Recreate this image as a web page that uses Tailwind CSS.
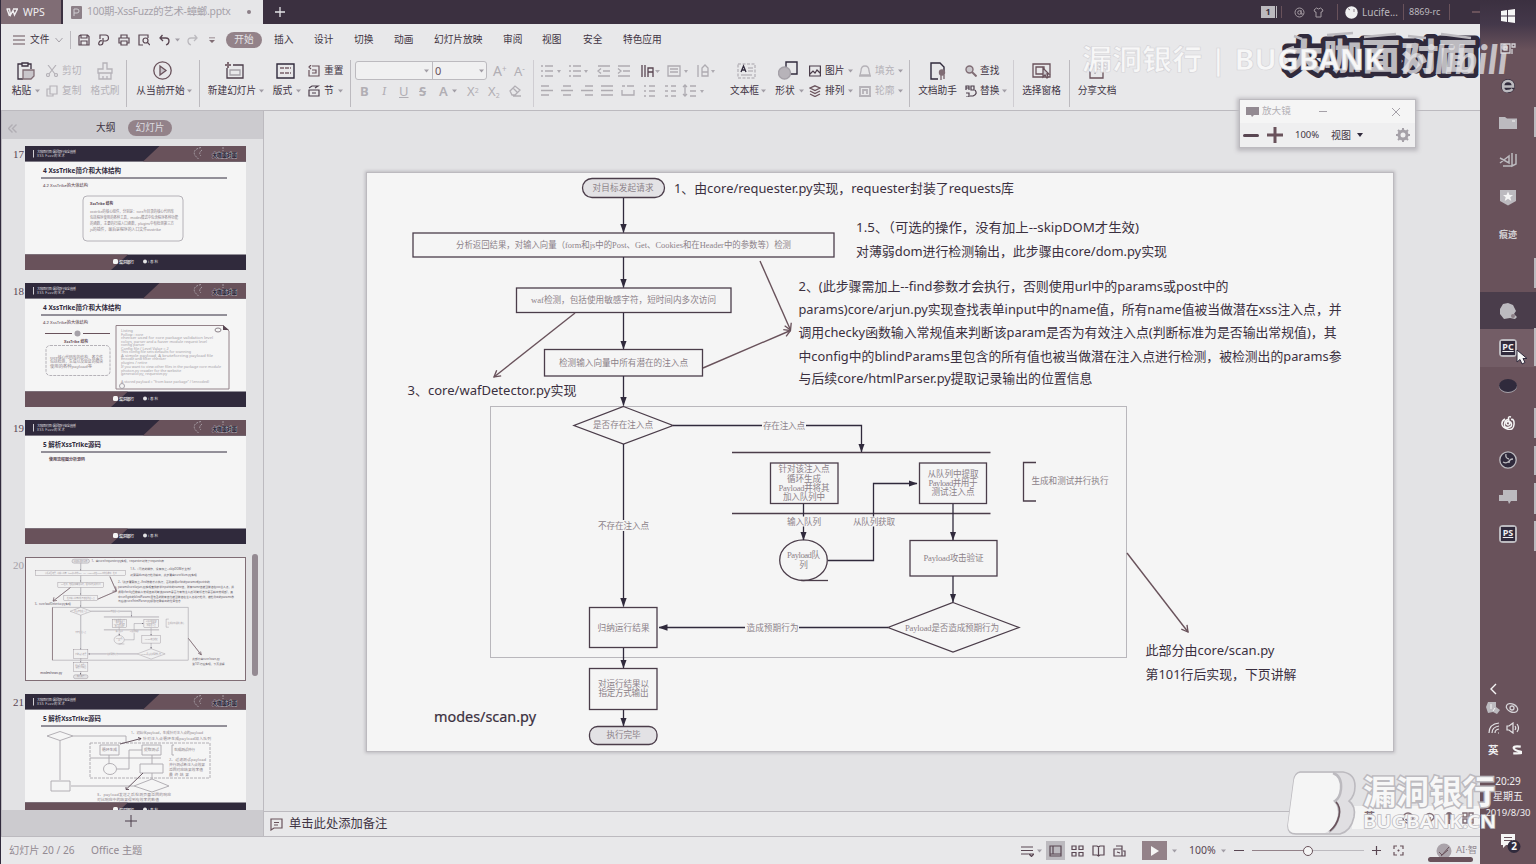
<!DOCTYPE html>
<html lang="zh-CN">
<head>
<meta charset="utf-8">
<title>WPS 演示</title>
<script src="https://cdn.jsdelivr.net/npm/@tailwindcss/browser@4"></script>
</head>
<body class="relative h-[864px] w-[1536px] overflow-hidden bg-[#e6e6e8] font-['Noto_Sans','Noto_Sans_CJK_SC',sans-serif] text-[#3f3443]">

<!-- shared symbols -->
<svg class="absolute h-0 w-0" aria-hidden="true">
  <defs>
    <marker id="solid" viewBox="0 0 9 7" refX="8.5" refY="3.5" markerWidth="9" markerHeight="7" markerUnits="userSpaceOnUse" orient="auto"><path d="M0 0.3 9 3.5 0 6.7Z" fill="#302a3c"/></marker>
    <marker id="open" viewBox="0 0 10 10" refX="9" refY="5" markerWidth="9" markerHeight="9" markerUnits="userSpaceOnUse" orient="auto"><path d="M2 1 9 5 2 9" fill="none" stroke="#69525b" stroke-width="1.5"/></marker>
    <symbol id="dd" viewBox="0 0 5 4"><path d="M0 0.5h5L2.5 3.5Z" fill="#a19da5"/></symbol>
    <symbol id="frame" viewBox="0 0 221 124">
      <rect width="221" height="124" fill="#f5f5f5"/>
      <rect width="221" height="15.6" fill="#302a3c"/>
      <path d="M134.500 0H221V15.600H118Z" fill="#69525b"/>
      <path d="M8.500 4v7.500" stroke="#cfcdd2" stroke-width="1"/>
      <g fill="#d8d6da" font-size="3.400"><text x="12" y="6.800" textLength="39">大咖面对面 · 漏洞银行安全直播</text><text x="12" y="11.200" textLength="28">XSS Fuzz的艺术</text></g>
      <path d="M176 1.500q-9 2-6 8l4 4M198 1v4M177 4q-4 3-1 6" fill="none" stroke="#bfbcc2" stroke-width=".7" stroke-dasharray="2 1"/>
      <text x="187" y="10.500" font-size="5.500" font-weight="900" fill="#302a3c" stroke="#bfbcc2" stroke-width=".6" paint-order="stroke" textLength="25">大咖面对面</text>
      <rect y="108.500" width="221" height="15.500" fill="#302a3c"/>
      <path d="M0 108.500H103L86 124H0Z" fill="#69525b"/>
      <rect x="88" y="113" width="5" height="5" rx="1.500" fill="#f5f5f5"/>
      <text x="94" y="117.500" font-size="4" fill="#f5f5f5" font-weight="500" textLength="15">漏洞银行</text>
      <circle cx="120" cy="115.500" r="2" fill="#e4e4e6"/><text x="123" y="117" font-size="3.600" fill="#e4e4e6" textLength="10">i春秋</text>
      <path d="M16 32H202" stroke="#302a3c" stroke-width="1"/>
    </symbol>

    <!-- flow chart slide -->
    <symbol id="slide" viewBox="367 173 1026 578">
      <rect x="367" y="173" width="1026" height="578" fill="#f5f5f5"/>
      <rect x="490.500" y="406.500" width="636" height="251" fill="none" stroke="#b9b7bc"/>
      <g fill="none" stroke="#4b3d4a" stroke-width="1.300">
        <rect x="582.500" y="178.500" width="82" height="19" rx="9.500" fill="#e3e2e5"/>
        <rect x="413" y="233" width="421" height="24"/>
        <rect x="516.500" y="288" width="214.500" height="24.500"/>
        <rect x="544.500" y="349.500" width="158" height="26.500"/>
        <path d="M623.500 406.500 673 425.500 623.500 444 574 425.500Z"/>
        <path d="M732 452.500H990.500M732 513.500H990.500"/>
        <rect x="770.500" y="463" width="67.500" height="40.500"/>
        <rect x="919.500" y="463" width="67" height="40.500"/>
        <path d="M1036 462.500H1023.500V501H1036"/>
        <ellipse cx="803.500" cy="560.200" rx="23.800" ry="20.300"/><path d="M801 580.500H828"/>
        <rect x="910" y="540.500" width="87" height="35.500"/>
        <path d="M953 602.500 1019 627.500 953 652 888 627.500Z"/>
        <rect x="589.500" y="607.500" width="67.500" height="40"/>
        <rect x="589.500" y="668.500" width="67.500" height="41"/>
        <rect x="589.500" y="726.500" width="67.500" height="18" rx="8" fill="#e3e2e5"/>
      </g>
      <g fill="none" stroke="#302a3c" stroke-width="1.300">
        <path d="M623.500 198V232.500" marker-end="url(#solid)"/><path d="M623.500 257V287.500" marker-end="url(#solid)"/><path d="M623.500 313V349" marker-end="url(#solid)"/><path d="M623.500 376V405.500" marker-end="url(#solid)"/><path d="M623.500 444V606.500" marker-end="url(#solid)"/><path d="M623.500 648V668" marker-end="url(#solid)"/><path d="M623.500 710V726" marker-end="url(#solid)"/>
        <path d="M673 425.500H861.500V452" marker-end="url(#solid)"/><path d="M803.500 504V540" marker-end="url(#solid)"/><path d="M828 560.500H873.500V483.500H917" marker-end="url(#solid)"/><path d="M953 504V540" marker-end="url(#solid)"/><path d="M953 576V602" marker-end="url(#solid)"/><path d="M888 627.500H659" marker-end="url(#solid)"/>
      </g>
      <g fill="none" stroke="#69525b" stroke-width="1.400">
        <path d="M760 261 790.500 330" marker-end="url(#open)"/><path d="M703 368 790.500 330.500" marker-end="url(#open)"/><path d="M575 313 494 377" marker-end="url(#open)"/><path d="M1127 553 1188 632" marker-end="url(#open)"/>
      </g>
      <g fill="#f5f5f5"><rect x="762" y="420" width="44" height="11"/><rect x="597" y="520" width="53" height="11"/><rect x="786" y="516.500" width="36" height="10"/><rect x="852" y="516.500" width="44" height="10"/><rect x="745" y="622" width="54" height="11"/></g>
      <g fill="#8c8289" font-family="'Liberation Serif','Noto Sans CJK SC',serif" font-size="8.600" text-anchor="middle">
        <text x="623" y="190.500" textLength="61">对目标发起请求</text>
        <text x="623.500" y="248" textLength="335" lengthAdjust="spacingAndGlyphs">分析返回结果，对输入向量（form和js中的Post、Get、Cookies和在Header中的参数等）检测</text>
        <text x="623.500" y="303" textLength="185" lengthAdjust="spacingAndGlyphs">waf检测，包括使用敏感字符，短时间内多次访问</text>
        <text x="623.500" y="365.500" textLength="129">检测输入向量中所有潜在的注入点</text>
        <text x="623" y="428" textLength="60">是否存在注入点</text>
        <text x="784" y="428.500" textLength="42">存在注入点</text>
        <text x="804" y="472" textLength="51">针对该注入点</text><text x="804" y="481.500" textLength="34">循环生成</text><text x="804" y="490.500" textLength="51">Payload并将其</text><text x="804" y="499.500" textLength="42">加入队列中</text>
        <text x="953" y="476.500" textLength="51">从队列中提取</text><text x="953" y="486" textLength="49">Payload并用于</text><text x="953" y="495" textLength="43">测试注入点</text>
        <text x="1070" y="484" textLength="77">生成和测试并行执行</text>
        <text x="804" y="524.500" textLength="34">输入队列</text><text x="874" y="524.500" textLength="42">从队列获取</text>
        <text x="623.500" y="528.500" textLength="51">不存在注入点</text>
        <text x="803.500" y="558" textLength="33">Payload队</text><text x="803.500" y="567.500">列</text>
        <text x="953.500" y="561" textLength="60">Payload攻击验证</text>
        <text x="952" y="630.500" textLength="94">Payload是否造成预期行为</text>
        <text x="772.500" y="630.500" textLength="52">造成预期行为</text>
        <text x="623.500" y="630.500" textLength="52">归纳运行结果</text>
        <text x="623.500" y="687" textLength="51">对运行结果以</text><text x="623.500" y="696" textLength="50">指定方式输出</text>
        <text x="623.500" y="738" textLength="34">执行完毕</text>
      </g>
      <g fill="#3b3040" font-size="13">
        <text x="674" y="193" textLength="340" lengthAdjust="spacingAndGlyphs">1、由core/requester.py实现，requester封装了requests库</text>
        <text x="856" y="232" textLength="283" lengthAdjust="spacingAndGlyphs">1.5、（可选的操作，没有加上--skipDOM才生效)</text>
        <text x="856" y="256" textLength="311" lengthAdjust="spacingAndGlyphs">对薄弱dom进行检测输出，此步骤由core/dom.py实现</text>
        <text x="798.500" y="291" textLength="430" lengthAdjust="spacingAndGlyphs">2、(此步骤需加上--find参数才会执行，否则使用url中的params或post中的</text>
        <text x="798.500" y="314" textLength="543" lengthAdjust="spacingAndGlyphs">params)core/arjun.py实现查找表单input中的name值，所有name值被当做潜在xss注入点，并</text>
        <text x="798.500" y="337" textLength="538" lengthAdjust="spacingAndGlyphs">调用checky函数输入常规值来判断该param是否为有效注入点(判断标准为是否输出常规值)，其</text>
        <text x="798.500" y="360.500" textLength="543" lengthAdjust="spacingAndGlyphs">中config中的blindParams里包含的所有值也被当做潜在注入点进行检测，被检测出的params参</text>
        <text x="798.500" y="383" textLength="294" lengthAdjust="spacingAndGlyphs">与后续core/htmlParser.py提取记录输出的位置信息</text>
        <text x="407.500" y="394.500" textLength="169" lengthAdjust="spacingAndGlyphs">3、core/wafDetector.py实现</text>
        <text x="1145.500" y="655" textLength="129" lengthAdjust="spacingAndGlyphs">此部分由core/scan.py</text>
        <text x="1145.500" y="678.500" textLength="151" lengthAdjust="spacingAndGlyphs">第101行后实现，下页讲解</text>
        <text x="434" y="721.500" font-size="13.500" stroke="#3b3040" stroke-width=".2" textLength="102" lengthAdjust="spacingAndGlyphs">modes/scan.py</text>
      </g>
    </symbol>
  </defs>
</svg>

<div class="flex h-full">
<div class="flex w-[1480px] flex-col border-l border-[#302a3c]">

  <!-- title bar -->
  <header class="flex h-6 shrink-0 items-stretch bg-[#3b3040] text-[10px] text-[#bcb9be]">
    <div class="flex w-[60px] items-center gap-[5px] bg-[#806d75] pl-[5px] text-[#f0eff1]">
      <svg class="h-[9px] w-3" viewBox="0 0 12 9" fill="none" stroke="currentColor" stroke-width="1.400"><path d="M.5 1h3l1 6L7 2.500 8.500 7 11.500 1H7M1 1l2.500 7"/></svg>
      <span class="text-[10.500px] leading-none">WPS</span>
    </div>
    <div class="ml-0.5 flex w-[200px] items-center bg-[#e6e6e8] pl-2 text-[#a5a1a8]">
      <svg class="h-[13px] w-[11px]" viewBox="0 0 11 13"><rect width="11" height="13" rx="1" fill="#8c7f87"/><path d="M3 10V3h3a2 2 0 0 1 0 4H3" fill="none" stroke="#cfcdd1"/></svg>
      <span class="ml-[5px] w-[142px] whitespace-nowrap text-[10.400px] tracking-[-0.250px]">100期-XssFuzz的艺术-蟑螂.pptx</span>
      <span class="ml-[18px] h-1 w-1 rounded-full bg-[#8c7f87]"></span>
    </div>
    <svg class="ml-3 mt-[7px] h-[10px] w-[10px]" viewBox="0 0 10 10" stroke="#e4e3e6" stroke-width="1.300"><path d="M5 0V10M0 5H10"/></svg>
    <div class="ml-auto flex items-center">
      <div class="h-3 w-3.5 bg-[#bcbabf] text-center text-[9px] font-bold leading-3 text-[#3b3040]">1</div><span class="ml-px h-3 w-px bg-[#bcbabf]"></span><span class="ml-1 h-3 w-px bg-[#69525b]"></span>
      <svg class="ml-3 h-[11px] w-[11px]" viewBox="0 0 11 11" fill="none" stroke="#a39aa1"><circle cx="5.500" cy="5.500" r="4.500"/><circle cx="5.500" cy="5.500" r="1.800"/><path d="M7 3v4h2"/></svg>
      <svg class="ml-2 h-[11px] w-[11px]" viewBox="0 0 11 11" fill="none" stroke="#a39aa1"><path d="M3.500 1 1 3l1 2h1v5h5V5h1l1-2-2.500-2Q5.500 3 3.500 1Z"/></svg>
      <span class="ml-[13px] h-4 w-px bg-[#69525b]"></span>
      <svg class="ml-[7px] h-[13px] w-[13px]" viewBox="0 0 13 13"><circle cx="6.500" cy="6.500" r="6.200" fill="#f0f0f1"/><path d="M3 2.500l2 1.500M9 3v3" stroke="#8c7f87"/></svg>
      <span class="ml-1 w-[41px] text-[10px]">Lucife...</span>
      <span class="h-4 w-px bg-[#69525b]"></span>
      <span class="ml-[5px] w-10 text-[9px]">8869-rc</span>
      <span class="h-4 w-px bg-[#69525b]"></span><span class="ml-[22px] h-0.5 w-2 bg-[#69525b]"></span>
    </div>
  </header>

  <!-- menu row -->
  <nav class="flex h-[31px] shrink-0 items-center whitespace-nowrap bg-[#e8e8ea] pl-3 pt-px text-[9.700px]">
    <svg class="h-2.5 w-[12px]" viewBox="0 0 12 10" stroke="#69525b" stroke-width="1.200"><path d="M0 1H12M0 5H12M0 9H12"/></svg>
    <span class="ml-[5px] w-[25px]">文件</span>
    <svg class="h-2 w-2" viewBox="0 0 8 8" fill="none" stroke="#a5a1a8"><path d="M.5 2 4 6 7.500 2"/></svg>
    <span class="ml-[7px] h-[18px] w-px bg-[#bcbabf]"></span>
    <div class="ml-[7px] flex w-[148px] items-center gap-2 text-[#594652]">
      <svg class="h-3 w-3" viewBox="0 0 12 12" fill="none" stroke="currentColor" stroke-width="1.200"><path d="M1 11V2L2.500 1h7L11 2.500V11ZM3 1v3h6V1M3 11V7h6v4"/></svg>
      <svg class="h-3 w-3" viewBox="0 0 12 12" fill="none" stroke="currentColor" stroke-width="1.200"><path d="M2 5V1h5.500a3 3 0 0 1 0 6H5M5 4v4q0 3-2.500 3T1 8.500 4 7"/></svg>
      <svg class="h-3 w-3" viewBox="0 0 12 12" fill="none" stroke="currentColor" stroke-width="1.200"><path d="M3 4V1h6v3M3 9H1V4h10v5H9M3 7h6v4H3Z"/></svg>
      <svg class="h-3 w-3" viewBox="0 0 12 12" fill="none" stroke="currentColor" stroke-width="1.200"><path d="M5 11H1V1h9v3"/><circle cx="7.500" cy="6.500" r="2.500"/><path d="M9.500 8.500 12 11"/></svg>
      <svg class="ml-px h-3 w-[11px]" viewBox="0 0 11 12" fill="none" stroke="currentColor" stroke-width="1.300"><path d="M3.500 1 1 4l3 3M1.500 4H7q3 0 3 3t-3 4"/></svg>
      <svg class="-ml-[3px] h-1 w-[5px]"><use href="#dd"/></svg>
      <svg class="-ml-px h-3 w-[11px]" viewBox="0 0 11 12" fill="none" stroke="#bcbabf" stroke-width="1.300"><path d="M7.500 1 10 4 7 7M9.500 4H4Q1 4 1 7t3 4"/></svg>
      <svg class="ml-[3px] h-[7px] w-[6px]" viewBox="0 0 7 7" fill="#806d75"><path d="M0 0h7v1H0ZM0 3h7L3.500 6.500Z"/></svg>
    </div>
    <span class="h-4 w-9 rounded-full bg-[#938289] text-center leading-4 text-[#e4e3e6]">开始</span>
    <span class="ml-3 w-10">插入</span><span class="w-10">设计</span><span class="w-10">切换</span><span class="w-10">动画</span><span class="w-[69px]">幻灯片放映</span><span class="w-[39px]">审阅</span><span class="w-[41px]">视图</span><span class="w-10">安全</span><span>特色应用</span>
  </nav>

  <!-- ribbon -->
  <section class="flex h-14 shrink-0 items-start whitespace-nowrap border-b border-[#bcbabf] bg-[#e8e8ea] pt-[5px] text-[9.700px] leading-5">
    <div class="ml-[7px] flex w-9 flex-col items-center">
      <div class="flex h-[21px] items-center"><svg class="h-[18px] w-[18px]" viewBox="0 0 18 18" fill="none" stroke="#3b3040" stroke-width="1.300"><path d="M5 2H1v15h5M11 2h3v5M5 1h6v3H5Z"/><path d="M6 8h11v6l-3 3H6Z" fill="#c9c6cb" stroke="#806d75"/></svg></div>
      <div class="flex items-center gap-1">粘贴<svg class="h-1 w-[5px]"><use href="#dd"/></svg></div>
    </div>
    <div class="ml-[2px] w-[42px] text-[#b5b2b8]">
      <div class="flex h-[21px] items-center gap-1"><svg class="h-3 w-3" viewBox="0 0 12 12" fill="none" stroke="currentColor" stroke-width="1.200"><path d="M2 0l7 9M10 0 3 9"/><circle cx="2" cy="10" r="1.500"/><circle cx="10" cy="10" r="1.500"/></svg>剪切</div>
      <div class="flex items-center gap-1"><svg class="h-3 w-3" viewBox="0 0 12 12" fill="none" stroke="currentColor" stroke-width="1.200"><path d="M4 1h7v8H4ZM4 4H1v7h6V9"/></svg>复制</div>
    </div>
    <div class="flex w-[34px] flex-col items-center text-[#b5b2b8]">
      <div class="flex h-[21px] items-center"><svg class="h-[18px] w-4" viewBox="0 0 16 18" fill="none" stroke="currentColor" stroke-width="1.300"><path d="M6 7V1h4v6h5v4H1V7ZM2 11v6h12v-6M6 17v-3M10 17v-3"/></svg></div>格式刷
    </div>
    <span class="ml-[4px] h-[47px] w-px bg-[#bcbabf]"></span>
    <div class="flex w-[70px] flex-col items-center">
      <div class="flex h-[21px] items-center"><svg class="h-[19px] w-[19px]" viewBox="0 0 19 19" fill="none" stroke="#69525b" stroke-width="1.300"><circle cx="9.500" cy="9.500" r="8.700"/><path d="M7 5v9l6-4.500Z" fill="#c9c6cb"/></svg></div>
      <div class="-mr-1 flex items-center gap-0.5">从当前开始<svg class="h-1 w-[5px]"><use href="#dd"/></svg></div>
    </div>
    <span class="ml-[2px] h-[47px] w-px bg-[#bcbabf]"></span>
    <div class="flex w-[68px] flex-col items-center">
      <div class="flex h-[21px] items-center"><svg class="h-[17px] w-[19px]" viewBox="0 0 19 17" fill="none" stroke="#4b3d4a" stroke-width="1.300"><path d="M2 6v10h16V3H8"/><path d="M5 8h10v5H5Z" stroke="#a5a1a8"/><path d="M3 0v6M0 3h6" stroke="#806d75" stroke-width="2"/></svg></div>
      <div class="-mr-1 flex items-center gap-[3px]">新建幻灯片<svg class="h-1 w-[5px]"><use href="#dd"/></svg></div>
    </div>
    <div class="flex w-[34px] flex-col items-center">
      <div class="flex h-[21px] items-center"><svg class="h-4 w-[19px]" viewBox="0 0 19 16" fill="none" stroke="#302a3c" stroke-width="1.400"><path d="M1 1h17v14H1Z"/><path d="M4 5h11M4 10h11" stroke="#938289" stroke-width="2" stroke-dasharray="4 1"/></svg></div>
      <div class="-mr-1 flex items-center gap-1">版式<svg class="h-1 w-[5px]"><use href="#dd"/></svg></div>
    </div>
    <div class="ml-[6px] w-[40px]">
      <div class="flex h-[21px] items-center gap-1"><svg class="h-3 w-3" viewBox="0 0 12 12" fill="none" stroke="#69525b" stroke-width="1.200"><path d="M4 1h7v10H1V5M4 5h4v3H4M3 0 1 2l2 2"/></svg>重置</div>
      <div class="flex items-center gap-1"><svg class="h-3 w-3" viewBox="0 0 12 12" fill="none" stroke="#4b3d4a" stroke-width="1.200"><path d="M1 5h10v6H1ZM1 3l3-2h6L7 3M4 8h4"/></svg>节<svg class="h-1 w-[5px]"><use href="#dd"/></svg></div>
    </div>
    <span class="ml-0.5 h-[47px] w-px bg-[#bcbabf]"></span>

    <!-- font group -->
    <div class="ml-1 w-[174px] text-[#b1aeb4]">
      <div class="flex h-[21px] items-center">
        <div class="flex h-[19px] w-[132px] items-center rounded-[3px] border border-[#bcbabf] bg-[#f0f0f1]"><span class="flex h-full w-[77px] items-center justify-end border-r border-[#bcbabf] pr-[3px]"><svg class="h-1 w-[5px]"><use href="#dd"/></svg></span><span class="flex-1 pl-0.5 text-[11px] leading-none text-[#69525b]">0</span><svg class="mr-0.5 h-1 w-[5px]"><use href="#dd"/></svg></div>
        <span class="ml-[6px] w-[21px] text-[14px]">A<sup class="text-[8px]">+</sup></span><span class="text-[13px]">A<sup class="text-[8px]">-</sup></span>
      </div>
      <div class="flex items-center pl-[5px] text-[13px]"><b class="w-5">B</b><i class="w-[19px] pl-0.5 font-serif">I</i><u class="w-5">U</u><b class="w-5 line-through">S</b><span class="w-[13px] font-semibold">A</span><svg class="mr-2.5 h-1 w-[5px]"><use href="#dd"/></svg><span class="w-[21px]">X<sup class="text-[7px]">2</sup></span><span class="w-[21px]">X<sub class="text-[7px]">2</sub></span><svg class="h-3 w-3" viewBox="0 0 12 12" fill="none" stroke="currentColor" stroke-width="1.300"><path d="M1 6l5-5 5 4-5 5H3ZM4 3l4 4M4 11h8"/></svg></div>
    </div>
    <span class="ml-1 h-[47px] w-px bg-[#cfcdd2]"></span>

    <!-- paragraph group -->
    <div class="ml-[7px] w-[185px] text-[#aeabb1]">
      <svg class="h-[41px] w-[178px]" viewBox="0 0 178 41" fill="none" stroke="currentColor" stroke-width="1.300">
        <path d="M0 6h2M0 11h2M0 16h2M4 6h8M4 11h8M4 16h8M28 6h2M28 11h2M28 16h2M32 6h8M32 11h8M32 16h8M57 6h12M62 11h7M57 16h12M60 8.500l-3 2.500 3 2.500M77 6h12M82 11h7M77 16h12M77 8.500l3 2.500-3 2.500"/>
        <path d="M101 5v12M104 5v12M107 17V8h5v9M107 12h5" stroke="#594652"/><path d="M127 6h12v10h-12ZM129 9h8M129 12h8M157 5v12M161 16V8l3-3 3 3v8ZM161 12h6"/>
        <path d="M0 26h8M0 30.500h12M0 35h8M22 26h8M20 30.500h12M22 35h8M44 26h8M40 30.500h12M44 35h8M60 26h12M60 30.500h12M60 35h12M81 30v5h12v-5M81 26h3M86 26h7M103 26h2M103 31h2M103 36h2M108 26h6M108 31h6M108 36h6M124 26h3M124 31h3M124 36h3M130 26h5M130 31h5M130 36h5M144 25v11M142 27l2-2 2 2M142 34l2 2 2-2M149 26h6M149 31h6M149 36h6"/>
        <g fill="#aeabb1" stroke="none"><path d="M16 10h4l-2 3ZM43 10h4l-2 3ZM114 10h5l-2.500 3ZM143 10h4l-2 3ZM170 10h4l-2 3ZM159 30h4l-2 3Z"/></g>
      </svg>
    </div>

    <div class="flex w-[40px] flex-col items-center">
      <div class="flex h-[21px] items-center"><svg class="h-4 w-[19px]" viewBox="0 0 19 16" fill="none" stroke="#a5a1a8"><path d="M1 1h17v14H1Z" stroke-dasharray="3 1.500"/><path d="M11 5h5M11 8h5M4 12h11"/><path d="M4 9l2.500-6L9 9M5 7h3" stroke="#302a3c" stroke-width="1.300"/></svg></div>
      <div class="-mr-1 flex items-center gap-0.5">文本框<svg class="h-1 w-[5px]"><use href="#dd"/></svg></div>
    </div>
    <div class="flex w-[43px] flex-col items-center">
      <div class="flex h-[21px] items-center"><svg class="h-[19px] w-5" viewBox="0 0 20 19" fill="none" stroke="#302a3c" stroke-width="1.400"><path d="M8 1h11v12H8Z"/><circle cx="6.500" cy="12" r="6" fill="#b7b3b9" stroke="#a5a1a8"/></svg></div>
      <div class="-mr-1 flex items-center gap-1">形状<svg class="h-1 w-[5px]"><use href="#dd"/></svg></div>
    </div>
    <div class="w-[50px]">
      <div class="flex h-[21px] items-center gap-1"><svg class="h-3 w-3" viewBox="0 0 12 12" fill="none" stroke="#4b3d4a" stroke-width="1.200"><path d="M.6 1h10.800v10H.6ZM1 9l3-3 2 2 2-3 3 3"/></svg>图片<svg class="h-1 w-[5px]"><use href="#dd"/></svg></div>
      <div class="flex items-center gap-1"><svg class="h-3 w-3" viewBox="0 0 12 12" fill="none" stroke="#69525b" stroke-width="1.300"><path d="M6 .8 11 3 6 5.500 1 3ZM1 6l5 2.500L11 6M1 9l5 2.500L11 9"/></svg>排列<svg class="h-1 w-[5px]"><use href="#dd"/></svg></div>
    </div>
    <div class="w-[50px] text-[#b5b2b8]">
      <div class="flex h-[21px] items-center gap-1"><svg class="h-3 w-3" viewBox="0 0 12 12" fill="none" stroke="currentColor" stroke-width="1.300"><path d="M2 6q0-5 4-5t4 5l1 4H1Zm-2 5h12"/></svg>填充<svg class="h-1 w-[5px]"><use href="#dd"/></svg></div>
      <div class="flex items-center gap-1"><svg class="h-3 w-3" viewBox="0 0 12 12" fill="none" stroke="currentColor" stroke-width="1.800"><path d="M1 10V2h10v8M0 11h12M4 9V5h4v4"/></svg>轮廓<svg class="h-1 w-[5px]"><use href="#dd"/></svg></div>
    </div>
    <span class="h-[47px] w-px bg-[#bcbabf]"></span>
    <div class="ml-[5px] flex w-[45px] flex-col items-center">
      <div class="flex h-[21px] items-center"><svg class="h-[18px] w-4" viewBox="0 0 16 18" fill="none" stroke="#302a3c" stroke-width="1.400"><path d="M8 17H1V1h9l4 4v4"/><circle cx="12" cy="10.500" r="2.500" fill="#806d75" stroke="#806d75"/><path d="M11 13v5M14 13v4" stroke="#806d75"/></svg></div>文档助手
    </div>
    <div class="ml-[5px] w-[47px]">
      <div class="flex h-[21px] items-center gap-[3px]"><svg class="h-3 w-3" viewBox="0 0 12 12" fill="none" stroke="#806d75" stroke-width="1.400"><circle cx="4.500" cy="4.500" r="3.500" fill="#c9c6cb"/><path d="M7 7l4.500 4.500" stroke-width="2"/></svg>查找</div>
      <div class="flex items-center gap-[3px]"><svg class="h-3 w-3" viewBox="0 0 12 12" fill="none" stroke="#4b3d4a" stroke-width="1.200"><path d="M1 5V1h3v4M1 3h3M6 1h3v4H6ZM10 5q3 4-2 6H5M1 8h3v4H1"/></svg>替换<svg class="h-1 w-[5px]"><use href="#dd"/></svg></div>
    </div>
    <span class="ml-[1px] h-[47px] w-px bg-[#cfcdd2]"></span>
    <div class="ml-1 flex w-[47px] flex-col items-center">
      <div class="flex h-[21px] items-center"><svg class="h-4 w-[19px]" viewBox="0 0 19 16" fill="none" stroke="#69525b" stroke-width="1.300"><path d="M1 1h17v13H1ZM4 4h8v7H4Z"/><path d="M11 5v9l2-2 2 3 1-1-1-3h2Z" fill="#c9c6cb"/></svg></div>选择窗格
    </div>
    <span class="ml-1 h-[47px] w-px bg-[#bcbabf]"></span>
    <div class="ml-1 flex w-[46px] flex-col items-center">
      <div class="flex h-[21px] items-center"><svg class="h-4 w-4" viewBox="0 0 16 16" fill="none" stroke="#69525b" stroke-width="1.300"><path d="M7 3H1v12h13V9"/><path d="M6 11q0-6 8-8M11 1h4v4" stroke="#a5a1a8"/></svg></div>分享文档
    </div>
  </section>

  <!-- workspace -->
  <main class="flex h-[726px] shrink-0 border-b border-[#bcbabf]">
    <aside class="flex w-[263px] shrink-0 flex-col border-x border-[#bcbabf] bg-[#e2e2e4]">
      <div class="flex h-7 shrink-0 items-center bg-[#cccbcf] pl-1.5 pt-1.5 text-[9.700px]">
        <svg class="h-[9px] w-[9px]" viewBox="0 0 9 9" fill="none" stroke="#b1aeb4" stroke-width="1.400"><path d="M4.500.5.500 4.500l4 4M8.500.5l-4 4 4 4"/></svg>
        <span class="ml-[79px] w-8">大纲</span><span class="h-4 w-11 rounded-full bg-[#938289] text-center leading-4 text-[#dddce0]">幻灯片</span>
      </div>
      <div class="flex h-[671px] overflow-hidden">
        <div class="flex w-[244px] flex-col gap-[13px] pt-[7px] font-['Liberation_Serif','Noto_Sans_CJK_SC',serif] text-[11px] text-[#594652]">
          <div class="flex h-[124px] shrink-0"><span class="w-[23px] pr-px text-right leading-4">17</span>
            <svg class="h-[124px] w-[221px] font-['Noto_Sans','Noto_Sans_CJK_SC']" viewBox="0 0 221 124"><use href="#frame"/>
              <text x="18" y="27" font-size="6.500" font-weight="700" fill="#302a3c" textLength="78" lengthAdjust="spacingAndGlyphs">4 XssTrike简介和大体结构</text>
              <text x="18" y="41" font-size="4" font-weight="500" fill="#69525b" textLength="45" lengthAdjust="spacingAndGlyphs">4.2 XssTrike的大体结构</text>
              <rect x="58" y="50" width="100" height="45" rx="4" fill="none" stroke="#b5b2b8"/>
              <g font-size="4" fill="#8c8289"><text x="65" y="59" fill="#594652" font-weight="700" textLength="23" lengthAdjust="spacingAndGlyphs">XssTrike 结构</text><text x="65" y="66.500" textLength="84" lengthAdjust="spacingAndGlyphs">xsstrike的核心组件，分别是：core为目录的核心代码库</text><text x="65" y="72.500" textLength="88" lengthAdjust="spacingAndGlyphs">包括程序使用的各种工具，modes模式中包含程序各种功能</text><text x="65" y="78.500" textLength="84" lengthAdjust="spacingAndGlyphs">的函数，主要的扫描入口函数，plugins中有检测第三方</text><text x="65" y="84.500" textLength="71" lengthAdjust="spacingAndGlyphs">js的插件，最后是程序的入口文件xsstrike</text></g>
            </svg></div>
          <div class="flex h-[124px] shrink-0"><span class="w-[23px] pr-px text-right leading-4">18</span>
            <svg class="h-[124px] w-[221px] font-['Noto_Sans','Noto_Sans_CJK_SC']" viewBox="0 0 221 124"><use href="#frame"/>
              <text x="18" y="27" font-size="6.500" font-weight="700" fill="#302a3c" textLength="78" lengthAdjust="spacingAndGlyphs">4 XssTrike简介和大体结构</text>
              <text x="18" y="41" font-size="4" font-weight="500" fill="#69525b" textLength="45" lengthAdjust="spacingAndGlyphs">4.2 XssTrike的大体结构</text>
              <path d="M20 50.500H47M58 50.500H85" stroke="#69525b"/><circle cx="52.500" cy="50.500" r="3" fill="#a5a1a8"/><text x="39" y="60" font-size="4" font-weight="700" fill="#69525b" textLength="24" lengthAdjust="spacingAndGlyphs">XssTrike 结构</text>
              <rect x="21" y="62.500" width="64" height="30" rx="4" fill="none" stroke="#b5b2b8" stroke-dasharray="3 1"/>
              <g font-size="4" fill="#8c8289"><text x="25" y="75.500" textLength="53" lengthAdjust="spacingAndGlyphs">core核心代码库的结构，各文件</text><text x="25" y="80" textLength="53" lengthAdjust="spacingAndGlyphs">包括检测，生成以及验证的模块</text><text x="25" y="84.500" textLength="42" lengthAdjust="spacingAndGlyphs">使用的各种payload等</text></g>
              <path d="M91 42.500H198L204 48V106H91Z" fill="none" stroke="#938289"/><path d="M198 42v5h6Z" fill="#594652"/><ellipse cx="193" cy="47" rx="3" ry="2" fill="none" stroke="#8c8289"/><circle cx="97" cy="103" r="2.500" fill="none" stroke="#a5a1a8"/>
              <g font-size="3.800" fill="#a5a1a8"><text x="96" y="49">Listing</text><text x="96" y="52.500">Follow : core</text><text x="96" y="56" textLength="92" lengthAdjust="spacingAndGlyphs">checker used for core package validation level</text><text x="96" y="59.500" textLength="86" lengthAdjust="spacingAndGlyphs">colors, parser and a fuzzer module request level</text><text x="96" y="63">config parser</text><text x="96" y="66.500">Config file / Level Value = 2</text><text x="96" y="70" textLength="70" lengthAdjust="spacingAndGlyphs">This config file sets defaults for scanning</text><text x="96" y="73.500" textLength="92" lengthAdjust="spacingAndGlyphs">A simple payload, A bruteforcing payload file</text><text x="96" y="77">Encode and filter checker</text><text x="96" y="81">plugins / retire</text><text x="96" y="85" textLength="100" lengthAdjust="spacingAndGlyphs">If you want to view other files in the package core module</text><text x="96" y="88.500">photon.py crawler for the website</text><text x="96" y="92">generator.py, requester.py</text><text x="96" y="99.500" textLength="88" lengthAdjust="spacingAndGlyphs">A stored payload = "from base package" / (encoded)</text></g>
            </svg></div>
          <div class="flex h-[124px] shrink-0"><span class="w-[23px] pr-px text-right leading-4">19</span>
            <svg class="h-[124px] w-[221px] font-['Noto_Sans','Noto_Sans_CJK_SC']" viewBox="0 0 221 124"><use href="#frame"/>
              <text x="18" y="27" font-size="6.500" font-weight="700" fill="#302a3c" textLength="58" lengthAdjust="spacingAndGlyphs">5 解析XssTrike源码</text>
              <text x="24" y="41" font-size="4" font-weight="700" fill="#594652" textLength="36">使用流程图分析源码</text>
            </svg></div>
          <div class="flex h-[124px] shrink-0"><span class="w-[23px] pr-px text-right leading-4 text-[#a5a1a8]">20</span>
            <div class="h-[124px] w-[221px] border border-[#806d75] font-['Noto_Sans','Noto_Sans_CJK_SC']"><svg class="h-full w-full opacity-80" preserveAspectRatio="none" viewBox="367 173 1026 578"><use href="#slide" x="367" y="173" width="1026" height="578"/><path d="M491 407H1127V657H491" fill="none" stroke="#b5b2b8" stroke-width="4"/><path d="M491 407V657" stroke="#69525b" stroke-width="4"/><g fill="none" stroke="#69525b" stroke-width="4"><path d="M760 261 790 330 703 368M790 330l-3-22M790 330l-18 0M575 313 494 377l4-18M494 377l18-3M1127 553 1188 632l-3-16M1188 632l-15-9"/></g><g fill="none" stroke="#b5b2b8" stroke-width="3"><path d="M623 198V233M623 257V288M623 313V349M623 376V406M623 444V607M623 648V668M673 425H861V452M732 452H990M732 513H990M888 627H659"/></g></svg></div></div>
          <div class="flex h-[124px] shrink-0"><span class="w-[23px] pr-px text-right leading-4">21</span>
            <svg class="h-[124px] w-[221px] font-['Noto_Sans','Noto_Sans_CJK_SC']" viewBox="0 0 221 124"><use href="#frame"/>
              <text x="18" y="27" font-size="6.500" font-weight="700" fill="#302a3c" textLength="58" lengthAdjust="spacingAndGlyphs">5 解析XssTrike源码</text>
              <g fill="none" stroke="#aba8ae" stroke-width=".9"><path d="M35 37.500 48 42 35 46.500 22 42ZM48 42H101V49M35 46.500V86M26 87H45V97H26ZM46 92H109"/><path d="M65 49H185V84H65Z" stroke-dasharray="3 1"/><path d="M75 51H94V61H75ZM117 51H136V61H117ZM65 64H136M84 61V70M92 75H104V56H117M127 61V70M115 70H138V79H115ZM127 79V85L144 92 127 98 109 92 127 85M149 51H147V61H149"/><ellipse cx="85" cy="75" rx="6.500" ry="5.500"/></g>
              <g fill="none" stroke="#594652" stroke-width=".9"><path d="M95 50 116 44.500l-3-1M116 44.500l-2 2M118 79 101 95.500V93M101 95.500h3"/></g>
              <g font-size="3.800" fill="#8c8289"><text x="106" y="40" textLength="72" lengthAdjust="spacingAndGlyphs">1、初始化payload，生成针对注入点的payload</text><text x="118" y="45.500" textLength="68">针对注入点循环生成payload加入队列</text><text x="149" y="57" textLength="21">生成测试并行</text><text x="144" y="67" textLength="37">2、过滤测试payload</text><text x="144" y="72" textLength="36">并行测试各注入点效果</text><text x="144" y="77" textLength="34">返回对应结果效率值</text><text x="144" y="82" textLength="20">最终结果</text><text x="72" y="102" textLength="74">3、payload发送之后检测页面返回的响应</text><text x="72" y="106.500" textLength="62">对比响应中的结果得到有效率的数值</text><text x="77" y="57" textLength="15">循环生成</text><text x="119" y="57" textLength="15">提取测试</text></g>
            </svg></div>
        </div>
        <div class="w-4 pl-[6px] pt-[415px]"><div class="h-[122px] w-[6px] rounded-full bg-[#948a92]"></div></div>
      </div>
      <div class="flex flex-1 items-center justify-center bg-[#cccbcf] pr-1 pb-1"><svg class="h-3 w-3" viewBox="0 0 12 12" stroke="#4b3d4a"><path d="M6 0V12M0 6H12"/></svg></div>
    </aside>

    <div class="flex flex-1 flex-col">
      <div class="flex-1 bg-[#e3e3e5] pl-[102px] pt-[61px]">
        <svg class="h-[580px] w-[1028px] border border-[#bcbabf] shadow-[0_0_3px_1px_#bcbabf]" viewBox="0 0 1026 578"><use href="#slide" width="1026" height="578"/></svg>
      </div>
      <div class="flex h-[25px] shrink-0 items-center gap-1.5 border-t border-[#bcbabf] bg-[#e8e8ea] pl-1.5 text-[12.300px]">
        <svg class="h-[13px] w-[13px]" viewBox="0 0 13 13" fill="none" stroke="#69525b" stroke-width="1.200"><path d="M1 1h11v9H4l-3 2ZM4 4.500h5M4 7h4"/></svg>单击此处添加备注
      </div>
    </div>
  </main>

  <!-- status bar -->
  <footer class="flex flex-1 items-center whitespace-nowrap bg-[#e8e8ea] pl-2 text-[10.200px] text-[#938a92]">
    <span class="w-[82px]">幻灯片 20 / 26</span><span>Office 主题</span>
    <div class="ml-auto flex items-center text-[#594652]">
      <svg class="h-3 w-[13px]" viewBox="0 0 13 12" fill="none" stroke="currentColor" stroke-width="1.200"><path d="M0 2h12M0 5.500h12M0 9h7M8 9h5l-2.500 2.500Z"/></svg><svg class="ml-[3px] h-1 w-[5px]"><use href="#dd"/></svg>
      <span class="ml-1 flex h-[19px] w-[19px] items-center justify-center bg-[#bcbabf]"><svg class="h-3 w-[13px]" viewBox="0 0 13 12" fill="none" stroke="currentColor" stroke-width="1.200"><path d="M1 1h11v10H1ZM4 1v8M1 9h11"/></svg></span>
      <svg class="ml-[6px] h-3 w-[13px]" viewBox="0 0 13 12" fill="none" stroke="currentColor" stroke-width="1.200"><path d="M1 1h4v3.500H1ZM8 1h4v3.500H8ZM1 7.500h4V11H1ZM8 7.500h4V11H8Z"/></svg>
      <svg class="ml-[8px] h-3 w-[13px]" viewBox="0 0 13 12" fill="none" stroke="currentColor" stroke-width="1.200"><path d="M6.500 2v9M1 1h4l1.500 1L8 1h4v9H8l-1.500 1L5 10H1Z"/></svg>
      <svg class="ml-2 h-3 w-[13px]" viewBox="0 0 13 12" fill="none" stroke="currentColor" stroke-width="1.200"><path d="M1 4h8v7H1ZM3 1h6v3M10 6h2v5H9M4 7l3 1"/></svg>
      <span class="ml-[16px] flex h-[19px] w-[25px] items-center justify-center bg-[#938289]"><svg class="h-2.5 w-2" viewBox="0 0 8 10"><path d="M0 0 8 5 0 10Z" fill="#f5f5f5"/></svg></span><svg class="ml-[5px] h-1 w-[5px]"><use href="#dd"/></svg>
      <span class="ml-3 w-[32px] text-[10.500px]">100%</span><svg class="h-1 w-[5px]"><use href="#dd"/></svg>
      <span class="ml-[8px] h-px w-[10px] bg-[#594652]"></span>
      <span class="ml-[8px] h-px w-[51px] bg-[#938289]"></span><span class="h-[10px] w-[10px] rounded-full border border-[#69525b] bg-[#f5f5f5]"></span><span class="h-px w-[51px] bg-[#bcbabf]"></span>
      <svg class="ml-2 h-[9px] w-[9px]" viewBox="0 0 9 9" stroke="currentColor" stroke-width="1.200"><path d="M4.500 0V9M0 4.500H9"/></svg>
      <svg class="ml-3 h-[11px] w-[11px]" viewBox="0 0 11 11" fill="none" stroke="#69525b" stroke-width="1.200"><path d="M1 4V1h3M7 1h3v3M10 7v3H7M4 10H1V7"/><path d="M5.500 4.500v2M4.500 5.500h2"/></svg>
      <svg class="ml-[32px] h-4 w-4" viewBox="0 0 16 16"><circle cx="8" cy="8" r="7.500" fill="#aaa3aa"/><path d="M3 9l3 3 7-8M5 13l7-6" stroke="#69525b" fill="none"/></svg>
      <span class="ml-1 w-[24px] text-[9.500px] text-[#938a92]">AI·智</span>
    </div>
  </footer>
</div>

<!-- desktop task bar -->
<aside class="flex w-14 flex-col items-center bg-[linear-gradient(#3b3040_0,#44384a_24px,#69525b_50px)] text-[10px] text-[#efeef0]">
  <div class="flex h-[30px] items-center pt-0.5"><svg class="h-3.5 w-3.5" viewBox="0 0 14 14" fill="#f5f5f5"><path d="M0 2l6-1v5.500H0ZM7 .9 14 0v6.500H7ZM0 7.500h6V13l-6-1ZM7 7.500h7V14l-7-1Z"/></svg></div>
  <div class="flex h-[37px] items-center"><svg class="h-3.5 w-4" viewBox="0 0 16 14" fill="none" stroke="#d4d2d6" stroke-width="1.300"><path d="M1 2h9v9H1ZM12 2h3v3h-3ZM12 7v5M4 5h3v3H4Z"/></svg></div>
  <div class="flex h-[37px] items-center"><svg class="h-[18px] w-[18px]" viewBox="0 0 18 18" fill="none"><circle cx="9" cy="9" r="7" fill="#302a3c"/><path d="M4 9.500h10Q14 4 9 4T4 9.500 9 14q3 0 4.500-2" stroke="#bcbabf" stroke-width="2.500"/></svg></div>
  <div class="flex h-[37px] items-center"><svg class="h-3.5 w-[18px]" viewBox="0 0 18 14"><path d="M0 1h6l2 1.500h10V13H0Z" fill="#bcbabf"/><path d="M13 5h3" stroke="#f5f5f5"/></svg></div>
  <div class="flex h-[37px] items-center"><svg class="h-4 w-[18px]" viewBox="0 0 18 16" fill="none" stroke="#bcbabf" stroke-width="1.500"><path d="M1 6l9 5V4L1 11M13 1v13l4-2V2M4 14h9"/></svg></div>
  <div class="flex h-[38px] items-center"><svg class="h-[18px] w-[18px]" viewBox="0 0 18 18"><path d="M1 2h16v11l-8 4.500L1 13Z" fill="#bcbabf"/><path d="M9 3.500l1.500 3.500H14l-2.700 2.200 1 3.800L9 10.800 5.700 13l1-3.800L4 7h3.500Z" fill="#f5f5f5"/></svg></div>
  <div class="flex h-[38px] items-center text-[9px] font-bold text-[#d4d2d6]">痕迹</div>
  <div class="mt-[38px] flex h-[37px] w-full items-center justify-center bg-[#4a3d4b]"><svg class="h-[18px] w-[18px]" viewBox="0 0 18 18"><path d="M4 2 9 1l5 2 3 6-2 3 3 3-2 2-5-1-6 1-4-5 0-5Z" fill="#bcbabf"/><circle cx="14" cy="14" r="2" fill="#8c7f87"/></svg></div>
  <div class="flex h-[38px] w-full items-center justify-center bg-[#735d66]"><div class="flex h-[18px] w-[18px] items-center justify-center rounded-sm bg-[#bcbabf]"><span class="h-3.5 w-3.5 bg-[#302a3c] text-center text-[9px] font-bold leading-[11px] underline">PC</span></div></div>
  <div class="flex h-[37px] items-center"><span class="h-[13px] w-[18px] rounded-[50%] bg-[#302a3c] shadow-[0_1px_0_#a5a1a8]"></span></div>
  <div class="flex h-[37px] items-center"><svg class="h-3.5 w-3.5" viewBox="0 0 14 14" fill="none" stroke="#f5f5f5" stroke-width="1.500"><path d="M10 1Q7 0 7.500 3l1.200 5a1.800 1.800 0 1 1-2-2.500Q10 5 10.500 8T7 11.500 3.500 8 7 3.500M4 3Q.5 5 1 8.500T7 13.200 13 8.500 10 3.500"/></svg></div>
  <div class="flex h-[37px] items-center"><svg class="h-[18px] w-[18px]" viewBox="0 0 18 18" fill="none"><circle cx="9" cy="9" r="8.200" fill="#302a3c" stroke="#bcbabf" stroke-width="1.300"/><path d="M7 3q-1 4 3 5M14 8q-4 0-4 4M4 11q4 2 6-1" stroke="#bcbabf" stroke-width="1.300"/></svg></div>
  <div class="flex h-[37px] items-center"><svg class="h-4 w-[18px]" viewBox="0 0 18 16"><path d="M4 1h14v11h-6l-2 3-1-3H0V6h4Z" fill="#bcbabf"/></svg></div>
  <div class="flex h-[38px] items-center"><div class="flex h-[18px] w-[18px] items-center justify-center rounded-sm bg-[#bcbabf]"><span class="h-3.5 w-3.5 bg-[#302a3c] text-center text-[9px] font-bold leading-[11px] underline">PS</span></div></div>

  <div class="mt-auto flex w-full flex-col pb-2.5">
    <svg class="ml-2.5 h-3 w-[7px]" viewBox="0 0 7 12" fill="none" stroke="#f5f5f5" stroke-width="1.400"><path d="M6 1 1 6l5 5"/></svg>
    <div class="mt-1.5 flex gap-[5px] pl-[6px]"><svg class="h-3.5 w-3.5" viewBox="0 0 14 14"><path d="M2 1h8v5l4 3-3 4-4-2-5 1-2-6Z" fill="#bcbabf"/><path d="M5 3v5M9 7l-2 3" stroke="#f5f5f5"/></svg><svg class="h-3.5 w-3.5" viewBox="0 0 14 14" fill="none" stroke="#d4d2d6" stroke-width="1.300"><ellipse cx="7" cy="7" rx="6" ry="4" transform="rotate(25 7 7)"/><circle cx="7" cy="7" r="2"/></svg></div>
    <div class="mt-[7px] flex gap-1.5 pl-2"><svg class="h-3 w-3" viewBox="0 0 12 12" fill="none" stroke="#e4e3e6" stroke-width="1.200"><path d="M1 11Q1 2 11 1M4 11Q4 5 11 4M7 11Q7 7.500 11 7M10 11h1"/></svg><svg class="h-3 w-[14px]" viewBox="0 0 14 12" fill="none" stroke="#e4e3e6" stroke-width="1.200"><path d="M1 4v4h2l4 3V1L3 4ZM9 4q1.500 2 0 4M11 2q3 4 0 8"/></svg></div>
    <div class="mt-1.5 flex items-center pl-2 leading-5"><span class="w-5 text-[10.500px] font-bold">英</span><svg class="ml-1 h-2.5 w-[10px]" viewBox="0 0 11 12" fill="none" stroke="#f5f5f5" stroke-width="2.600"><path d="M10 2Q1 1 1.500 3.500T9.500 8 1 10"/></svg></div>
    <div class="mt-[14px] text-center text-[10px] leading-[15.500px]"><div>20:29</div><div>星期五</div><div class="whitespace-nowrap text-[9.500px]">2019/8/30</div></div>
    <div class="mt-[14px] flex pl-[21px]"><svg class="h-5 w-5" viewBox="0 0 20 20"><path d="M0 0h14v11H5L2 14V11H0Z" fill="#f5f5f5"/><path d="M3 3.500h8M3 6.500h8" stroke="#69525b"/><circle cx="13" cy="12.500" r="6.500" fill="#302a3c"/><text x="13" y="16" font-size="10" font-weight="700" text-anchor="middle" fill="#f5f5f5">2</text></svg></div>
  </div>
</aside>
</div>

<!-- running-window markers on the screen edge -->
<svg class="absolute right-0 top-0 h-[600px] w-0.5" viewBox="0 0 2 600" fill="#bcbabf"><path d="M0 107h2v30H0ZM0 258h2v30H0ZM0 328h2v38H0ZM0 408h2v30H0ZM0 446h2v29H0ZM0 483h2v31H0ZM0 521h2v30H0Z"/></svg>

<!-- magnifier window -->
<section class="absolute left-[1239px] top-[99px] flex h-[49px] w-[177px] flex-col border border-[#bcbabf] bg-[#f5f5f5] text-[10px] shadow-[0_1px_4px_2px_#bcbabf]">
  <div class="flex h-[23px] items-center pl-[6px] text-[#b1aeb4]"><svg class="h-3 w-[13px]" viewBox="0 0 13 12"><path d="M0 1h13v8H8l-2 2-1-2H0Z" fill="#938a92"/></svg><span class="ml-[3px] w-[57px] text-[9.600px]">放大镜</span><span class="h-px w-2 bg-[#a5a1a8]"></span><svg class="ml-[65px] h-2 w-2" viewBox="0 0 8 8" stroke="#a5a1a8"><path d="M0 0 8 8M8 0 0 8"/></svg></div>
  <div class="flex flex-1 items-center bg-[#efeff0] pl-[3px]"><span class="h-[3px] w-4 rounded bg-[#594652]"></span><svg class="ml-2 h-4 w-4" viewBox="0 0 16 16" stroke="#69525b" stroke-width="3"><path d="M8 0V16M0 8H16"/></svg><span class="ml-3 w-[36px] text-[9.500px]">100%</span><span class="w-[26px]">视图</span><svg class="h-[5px] w-[6px]" viewBox="0 0 6 5"><path d="M0 0h6L3 4Z" fill="#302a3c"/></svg>
  <svg class="ml-auto mr-[5px] h-3.5 w-3.5" viewBox="0 0 14 14" fill="none" stroke="#a5a1a8"><circle cx="7" cy="7" r="4" stroke-width="3"/><path d="M7 0V3M7 11v3M0 7h3M11 7h3M2 2l2 2M10 10l2 2M12 2l-2 2M4 10l-2 2" stroke-width="2"/></svg></div>
</section>

<!-- stream watermark, top -->
<svg class="absolute left-[1070px] top-[26px] h-[60px] w-[450px]" viewBox="1070 26 450 60">
  <g fill="#bcbabf" stroke="#302a3c" paint-order="stroke" stroke-linejoin="round" font-weight="900" font-size="36" stroke-width="9">
    <text x="1285" y="70" textLength="192" lengthAdjust="spacingAndGlyphs">大咖面对面</text>
  </g>
  <path d="M1294 36l8 3M1327 35l26-2M1364 37l32-3M1408 36l18 2M1441 34l30 4M1286 50l8-3" stroke="#bcbabf" stroke-width="2.500"/>
  <text x="1082" y="70" font-size="28" font-weight="700" fill="#f7f7f7" stroke="#d4d3d7" stroke-width=".6" textLength="302" lengthAdjust="spacingAndGlyphs">漏洞银行 | BUGBANK</text>
  <text x="1402" y="74" font-size="41" font-weight="700" font-style="italic" font-family="Lato" fill="#e6e5e8" fill-opacity=".75" textLength="106" lengthAdjust="spacingAndGlyphs">bilibili</text>
</svg>

<!-- input method bar -->
<div class="absolute left-[1352px] top-[806px] flex h-[23px] w-32 items-center gap-2.5 bg-[#f5f5f5] pl-3 text-[11px] font-bold text-[#806d75]"><span>英</span><span>·</span><svg class="ml-1 h-3 w-3" viewBox="0 0 12 12" fill="none" stroke="currentColor" stroke-width="1.500"><circle cx="6" cy="6" r="5"/><path d="M3.500 7Q6 10 8.500 7"/></svg><svg class="h-3 w-3" viewBox="0 0 12 12" fill="none" stroke="currentColor" stroke-width="1.500"><path d="M1 10V6a4.500 4.500 0 0 1 9 0L6 10V5"/></svg><svg class="h-3 w-1.5" viewBox="0 0 6 12" fill="currentColor"><rect width="6" height="8" rx="3"/><path d="M2 8h2v4H2Z"/></svg><svg class="h-3 w-3" viewBox="0 0 12 12" fill="none" stroke="currentColor" stroke-width="1.500"><path d="M1 1h4v4H1ZM7 1h4v4H7ZM1 7h4v4H1ZM7 7h4v4H7Z"/></svg></div>
<div class="absolute left-[1428px] top-[857px] h-[5px] w-[45px] rounded-full bg-[#69525b]"></div>

<!-- stream watermark, bottom -->
<svg class="absolute left-[1280px] top-[766px] h-[74px] w-[222px]" viewBox="1280 766 222 74">
  <path d="M1300 772h43q12 2 12 14 0 10-6 15 7 5 5 16-3 14-14 17h-44q-8 0-8-8l6-46q1-7 6-8Z" fill="#e0dfe2" stroke="#bcbabf" stroke-width="1.600"/>
  <path d="M1300 773h33q9 3 8 16-1 9-6 12 5 5 4 15-3 13-14 17h-30q-7 0-7-8l6-45q1-6 6-7Z" fill="#f5f5f5"/>
  <path d="M1333 773q9 3 8 16-1 9-6 12 5 5 4 15-3 12-10 16" fill="none" stroke="#bcbabf" stroke-width="2.500"/><path d="M1336 802q5 5 3 14t-9 15" fill="none" stroke="#69525b" stroke-width="1.600"/>
  <g fill="#f7f7f7" stroke="#bcbabf" paint-order="stroke" font-weight="700"><text x="1363" y="804" font-size="33" stroke-width="3" textLength="132" lengthAdjust="spacingAndGlyphs">漏洞银行</text><text x="1363" y="828" font-size="17" font-weight="600" stroke-width="1.400" textLength="133" lengthAdjust="spacingAndGlyphs">BUGBANK.CN</text></g>
</svg>

<!-- pointer -->
<svg class="absolute left-[1516px] top-[349px] h-4 w-3" viewBox="0 0 12 16"><path d="M1 1v12l3-2.500 2 4.500 3-1.500L7 9.500h4Z" fill="#f5f5f5" stroke="#302a3c"/></svg>
</body>
</html>
